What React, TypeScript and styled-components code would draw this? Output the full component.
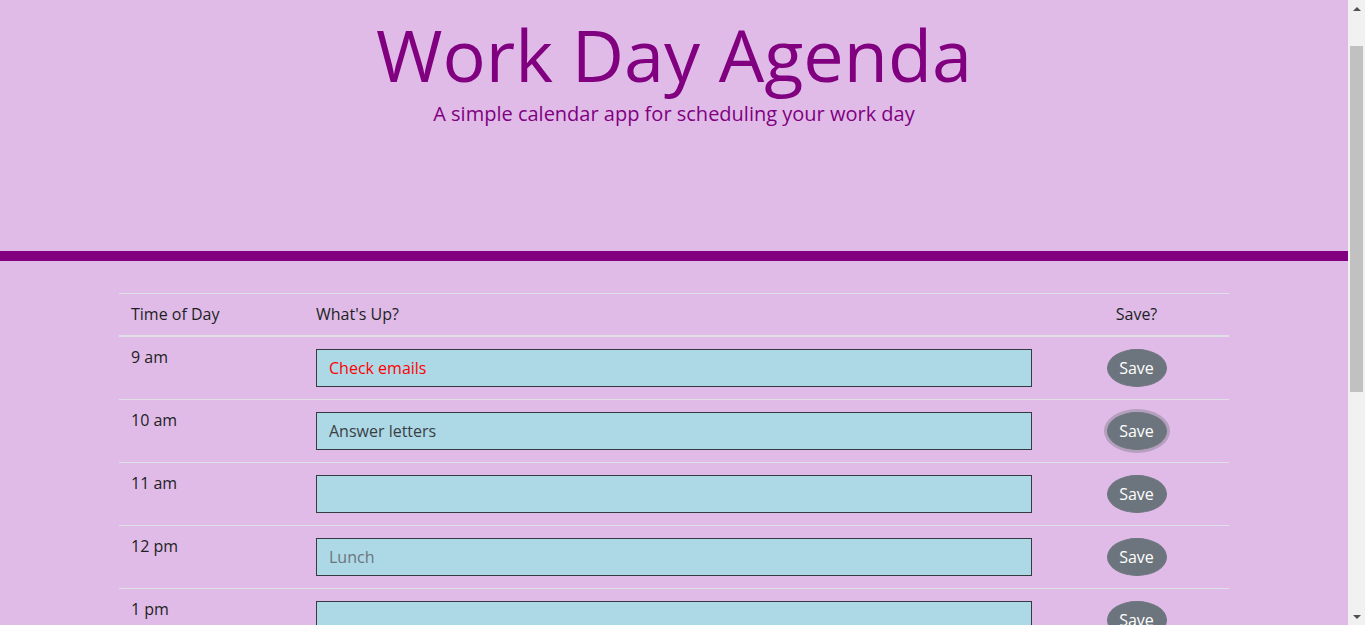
import React from "react";
import styled, { createGlobalStyle } from "styled-components";

const Global = createGlobalStyle`
  html, body { margin: 0; padding: 0; }
  body {
    margin-right: 17px;
    background: #e0bbe8;
    font-family: "Open Sans", "Noto Sans", sans-serif;
    font-size: 16px;
    line-height: 1.5;
    color: #212529;
  }
  * { box-sizing: border-box; }
`;

const Header = styled.header`
  height: 261px;
  padding-top: 11px;
  border-bottom: 10px solid #800080;
  margin-bottom: 32px;
  text-align: center;
  color: #800080;
`;

const Title = styled.h1`
  margin: 0;
  font-size: 72px;
  font-weight: 400;
  line-height: 1.2;
`;

const Lead = styled.p`
  margin: 2px 0 0;
  font-size: 20px;
  font-weight: 400;
  line-height: 1.5;
`;

const Container = styled.main`
  width: 1110px;
  margin: 0 auto;
  padding-bottom: 160px;
`;

const Table = styled.table`
  width: 100%;
  border-collapse: collapse;
  table-layout: fixed;
`;

const Th = styled.th<{ $align?: string; $w: string }>`
  width: ${(p) => p.$w};
  text-align: ${(p) => p.$align || "left"};
  font-weight: 400;
  padding: 8px 12px 9px;
  border-top: 1px solid #dee2e6;
  border-bottom: 2px solid #dee2e6;
  line-height: 24px;
  color: #1d1f24;
`;

const Tr = styled.tr`
  border-top: 1px solid #dee2e6;
  &:first-child { border-top: none; }
`;

const TimeCell = styled.td`
  vertical-align: top;
  padding: 8px 12px 12px;
  font-weight: 400;
  line-height: 24px;
  color: #1d1f24;
`;

const Cell = styled.td<{ $center?: boolean }>`
  padding: 12px;
  text-align: ${(p) => (p.$center ? "center" : "left")};
  vertical-align: top;
`;

const Input = styled.input<{ $color: string }>`
  display: block;
  width: 100%;
  height: 38px;
  padding: 6px 12px;
  border: 1px solid #343a40;
  background: #add8e6;
  font-family: inherit;
  font-size: 16px;
  line-height: 24px;
  color: ${(p) => p.$color};
  outline: none;
`;

const SaveButton = styled.button<{ $focus?: boolean }>`
  width: 60px;
  height: 38px;
  border: 1px solid #6c757d;
  border-radius: 50%;
  background: #6c757d;
  color: #fff;
  font-family: inherit;
  font-size: 16px;
  line-height: 24px;
  padding: 0;
  cursor: pointer;
  box-shadow: ${(p) => (p.$focus ? "0 0 0 3px rgba(150,140,160,0.6)" : "none")};
`;

const ScrollTrack = styled.div`
  position: fixed;
  top: 0;
  right: 0;
  width: 17px;
  height: 100vh;
  background: #f1f1f1;
  display: flex;
  flex-direction: column;
  align-items: center;
`;

const Arrow = styled.div<{ $down?: boolean }>`
  width: 17px;
  height: 17px;
  display: flex;
  align-items: center;
  justify-content: center;
  margin-top: ${(p) => (p.$down ? "auto" : "0")};
  &::after {
    content: "";
    width: 0;
    height: 0;
    border-left: 4px solid transparent;
    border-right: 4px solid transparent;
    ${(p) =>
      p.$down
        ? "border-top: 4px solid #505050;"
        : "border-bottom: 4px solid #505050;"}
  }
`;

const Thumb = styled.div`
  width: 13px;
  height: 346px;
  margin-top: 29px;
  background: #c1c1c1;
`;

const rows = [
  { time: "9 am", text: "Check emails", color: "#ff0000" },
  { time: "10 am", text: "Answer letters", color: "#3a3f44", focus: true },
  { time: "11 am", text: "", color: "#495057" },
  { time: "12 pm", text: "Lunch", color: "#6c757d" },
  { time: "1 pm", text: "", color: "#495057" },
  { time: "2 pm", text: "", color: "#495057" },
  { time: "3 pm", text: "", color: "#495057" },
  { time: "4 pm", text: "", color: "#495057" },
  { time: "5 pm", text: "", color: "#495057" },
];

export default function App() {
  return (
    <>
      <Global />
      <Header>
        <Title>Work Day Agenda</Title>
        <Lead>A simple calendar app for scheduling your work day</Lead>
      </Header>
      <Container>
        <Table>
          <thead>
            <tr>
              <Th $w="185px">Time of Day</Th>
              <Th $w="740px">What's Up?</Th>
              <Th $w="185px" $align="center">Save?</Th>
            </tr>
          </thead>
          <tbody>
            {rows.map((r) => (
              <Tr key={r.time}>
                <TimeCell>{r.time}</TimeCell>
                <Cell>
                  <Input $color={r.color} defaultValue={r.text} />
                </Cell>
                <Cell $center>
                  <SaveButton $focus={r.focus}>Save</SaveButton>
                </Cell>
              </Tr>
            ))}
          </tbody>
        </Table>
      </Container>
      <ScrollTrack aria-hidden>
        <Arrow />
        <Thumb />
        <Arrow $down />
      </ScrollTrack>
    </>
  );
}
